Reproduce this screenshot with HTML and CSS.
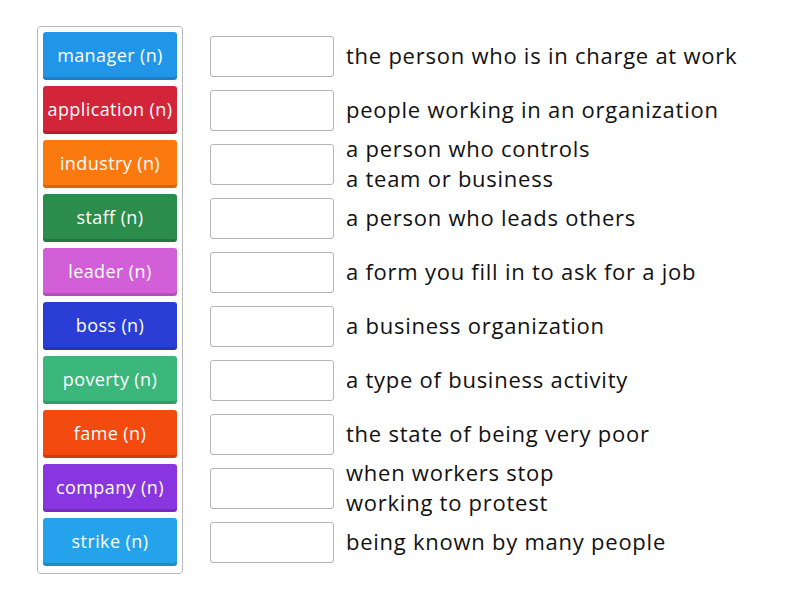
FILE: index.html
```html
<!DOCTYPE html>
<html>
<head>
<meta charset="utf-8">
<link rel="stylesheet" href="styles.css">
</head>
<body>
<div class="page">
  <div class="bank">
    <div class="tile c1">manager (n)</div>
    <div class="tile c2">application (n)</div>
    <div class="tile c3">industry (n)</div>
    <div class="tile c4">staff (n)</div>
    <div class="tile c5">leader (n)</div>
    <div class="tile c6">boss (n)</div>
    <div class="tile c7">poverty (n)</div>
    <div class="tile c8">fame (n)</div>
    <div class="tile c9">company (n)</div>
    <div class="tile c10">strike (n)</div>
  </div>
  <div class="rows">
    <div class="row"><div class="slot"></div><div class="def">the person who is in charge at work</div></div>
    <div class="row"><div class="slot"></div><div class="def">people working in an organization</div></div>
    <div class="row"><div class="slot"></div><div class="def">a person who controls<br>a team or business</div></div>
    <div class="row"><div class="slot"></div><div class="def">a person who leads others</div></div>
    <div class="row"><div class="slot"></div><div class="def">a form you fill in to ask for a job</div></div>
    <div class="row"><div class="slot"></div><div class="def">a business organization</div></div>
    <div class="row"><div class="slot"></div><div class="def">a type of business activity</div></div>
    <div class="row"><div class="slot"></div><div class="def">the state of being very poor</div></div>
    <div class="row"><div class="slot"></div><div class="def">when workers stop<br>working to protest</div></div>
    <div class="row"><div class="slot"></div><div class="def">being known by many people</div></div>
  </div>
</div>
</body>
</html>
```

FILE: styles.css
```css
html, body {
  margin: 0;
  padding: 0;
  background: #ffffff;
}
body {
  font-family: "Open Sans", "Noto Sans", sans-serif;
}
.page {
  display: flex;
  align-items: flex-start;
  padding: 26px 0 0 37px;
}
.bank {
  width: 134px;
  padding: 5px 5px 7px 5px;
  border: 1px solid #b9b9b9;
  border-radius: 4px;
  display: flex;
  flex-direction: column;
  gap: 6px;
}
.tile {
  height: 48px;
  box-sizing: border-box;
  border-radius: 3px;
  display: flex;
  align-items: center;
  justify-content: center;
  color: #ffffff;
  font-size: 18px;
  letter-spacing: 0.4px;
  padding-bottom: 2px;
  box-shadow: inset 0 -3px 0 rgba(0,0,0,0.15);
}
.c1 { background: #2196e9; }
.c2 { background: #d3253a; }
.c3 { background: #fb7a10; }
.c4 { background: #2c8c4c; }
.c5 { background: #d25fd8; }
.c6 { background: #2a3ed6; }
.c7 { background: #3bb77b; }
.c8 { background: #f34a10; }
.c9 { background: #8936e1; }
.c10 { background: #24a3ec; }
.rows {
  margin-left: 27px;
  padding-top: 6px;
  display: flex;
  flex-direction: column;
  gap: 6px;
}
.row {
  height: 48px;
  display: flex;
  align-items: center;
}
.slot {
  width: 124px;
  height: 41px;
  box-sizing: border-box;
  border: 1px solid #b5b5b5;
  border-radius: 3px;
  flex: none;
}
.def {
  margin-left: 12px;
  font-size: 22px;
  letter-spacing: 0.75px;
  line-height: 30px;
  color: #111111;
  margin-top: -2px;
}
```
